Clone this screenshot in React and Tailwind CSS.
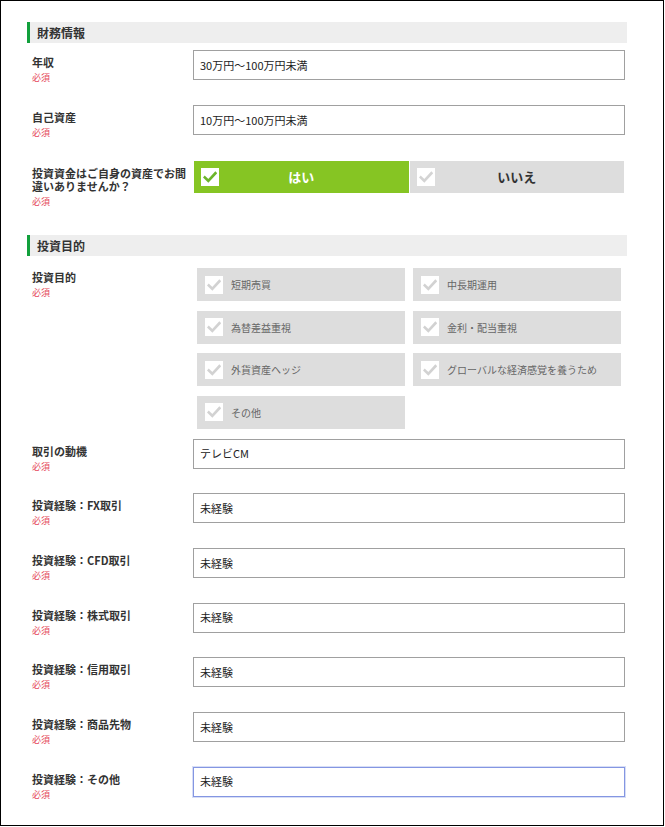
import React from 'react'

const FONT = { fontFamily: '"Noto Sans CJK JP", "Noto Sans", sans-serif' }

function Check({ color, size = 18 }) {
  return (
    <span className="flex items-center justify-center bg-white shrink-0 w-[18px] h-[18px]">
      <svg width={size - 4} height={size - 4} viewBox="0 0 14 14" fill="none">
        <path d="M1.8 7.4 L5.3 10.8 L12.4 3.2" stroke={color} strokeWidth="2.6" strokeLinecap="square" />
      </svg>
    </span>
  )
}

function SectionTitle({ children }) {
  return (
    <div className="h-[21px] bg-[#eeeeee] border-l-[3px] border-[#12a03c] pl-[7px] flex items-center text-[12px] font-bold text-[#333]">
      {children}
    </div>
  )
}

function Label({ children, pt = 'pt-[6px]' }) {
  return (
    <div className={`w-[166px] shrink-0 pl-[5px] ${pt}`}>
      <div className="text-[11px] leading-[13px] font-bold text-[#333]">{children}</div>
      <div className="mt-[3px] text-[9px] leading-[12px] text-[#e5485a]">必須</div>
    </div>
  )
}

function InputRow({ label, value, focus, className }) {
  return (
    <div className={`flex items-start h-[30px] ${className}`}>
      <Label>{label}</Label>
      <div
        className={`w-[432px] h-[30px] shrink-0 flex items-center pl-[6px] text-[11px] text-[#222] bg-white border ${
          focus ? 'border-[#8496e2] shadow-[0_0_0_1px_rgba(140,160,230,0.35)]' : 'border-[#a0a0a0]'
        }`}
      >
        {value}
      </div>
    </div>
  )
}

const PURPOSES = [
  '短期売買',
  '中長期運用',
  '為替差益重視',
  '金利・配当重視',
  '外貨資産ヘッジ',
  'グローバルな経済感覚を養うため',
  'その他',
]

const EXPERIENCE = [
  '投資経験：FX取引',
  '投資経験：CFD取引',
  '投資経験：株式取引',
  '投資経験：信用取引',
  '投資経験：商品先物',
  '投資経験：その他',
]

export default function App() {
  return (
    <div className="w-[664px] h-[826px] border border-black bg-white pt-[21px] pl-[26px]" style={FONT}>
      <div className="w-[600px]">
        <SectionTitle>財務情報</SectionTitle>

        <InputRow className="mt-[7px]" label="年収" value="30万円～100万円未満" />
        <InputRow className="mt-[25px]" label="自己資産" value="10万円～100万円未満" />

        <div className="flex items-start h-[32px] mt-[26px]">
          <Label>投資資金はご自身の資産でお間違いありませんか？</Label>
          <div className="ml-[1px] w-[430px] h-[32px] shrink-0 grid grid-cols-2 gap-[1px]">
            <div className="relative flex items-center bg-[#86c523] pl-[7px]">
              <Check color="#6cb52a" />
              <span className="absolute inset-0 flex items-center justify-center text-[13px] font-bold text-white">はい</span>
            </div>
            <div className="relative flex items-center bg-[#dddddd] pl-[7px]">
              <Check color="#d4d4d4" />
              <span className="absolute inset-0 flex items-center justify-center text-[13px] font-bold text-[#333]">いいえ</span>
            </div>
          </div>
        </div>

        <div className="mt-[42px]">
          <SectionTitle>投資目的</SectionTitle>
        </div>

        <div className="flex items-start mt-[12px]">
          <Label pt="pt-[3px]">投資目的</Label>
          <div className="ml-[4px] w-[424px] shrink-0 grid grid-cols-2 gap-x-[8px] gap-y-[9.5px]">
            {PURPOSES.map(p => (
              <div key={p} className="h-[33px] bg-[#dddddd] flex items-center pl-[8px]">
                <Check color="#d2d2d2" />
                <span className="ml-[8px] text-[10px] text-[#666]">{p}</span>
              </div>
            ))}
          </div>
        </div>

        <InputRow className="mt-[10px]" label="取引の動機" value="テレビCM" />
        {EXPERIENCE.map((e, i) => (
          <InputRow
            key={e}
            className="mt-[24.7px]"
            label={e}
            value="未経験"
            focus={i === EXPERIENCE.length - 1}
          />
        ))}
      </div>
    </div>
  )
}
